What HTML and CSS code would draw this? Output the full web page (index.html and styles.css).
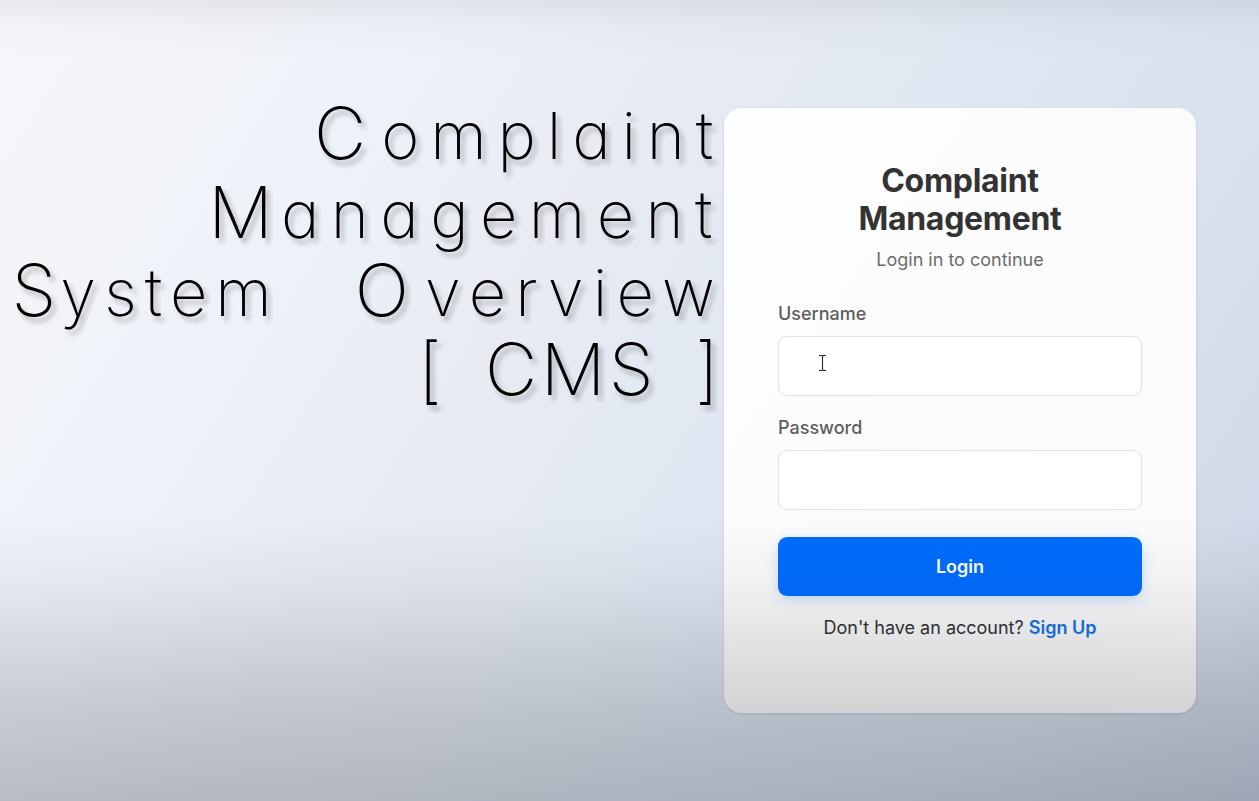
FILE: index.html
```html
<!DOCTYPE html>
<html lang="en">
<head>
<meta charset="utf-8">
<title>Complaint Management</title>
<link rel="stylesheet" href="styles.css">
</head>
<body>
<main class="page">
  <h1 class="hero">
    <span class="line l1">C<span class="low">omplaint</span></span>
    <span class="line l2">M<span class="low">anagement</span></span>
    <span class="line l3"><span class="w-system">S<span class="low">ystem</span></span> <span class="w-overview">O<span class="low">verview</span></span></span>
    <span class="line l4"><span>[</span><span class="w-cms">CMS</span><span>]</span></span>
  </h1>
  <form class="card">
    <h2 class="title">Complaint<br>Management</h2>
    <p class="subtitle">Login in to continue</p>
    <label class="label" for="user">Username</label>
    <div class="field">
      <input class="input" id="user" type="text">
      <svg class="cursor" viewBox="0 0 9 18" width="9" height="18"><path d="M1 1.5H3.5L4.5 2.3L5.5 1.5H8M4.5 2V16M1 16.5H3.5L4.5 15.7L5.5 16.5H8" fill="none" stroke="#222" stroke-width="1.1"/></svg>
    </div>
    <label class="label" for="pass">Password</label>
    <div class="field"><input class="input" id="pass" type="password"></div>
    <button class="button" type="button">Login</button>
    <p class="signup">Don't have an account? <a class="link" href="#">Sign Up</a></p>
  </form>
</main>
</body>
</html>
```
FILE: styles.css
```css
* { box-sizing: border-box; }
body { margin: 0; font-family: Inter, "Liberation Sans", sans-serif; }
.page {
  position: relative;
  display: flex;
  align-items: flex-start;
  width: 100%;
  height: 801px;
  overflow: hidden;
  background: linear-gradient(122deg, #f6f7fa 0%, #f2f4f8 12%, #edf1fa 26%, #e8ebf3 40%, #e2e9f3 53%, #dde4f0 66%, #d4deea 84%, #ccd3e4 100%);
}
.page::after {
  content: "";
  position: absolute;
  inset: 0;
  pointer-events: none;
  background:
    linear-gradient(rgba(0,0,0,.06) 0, rgba(0,0,0,.015) 25px, transparent 60px),
    linear-gradient(transparent 515px, rgba(0,0,0,.04) 580px, rgba(0,2,6,.1) 645px, rgba(0,2,6,.16) 712px, rgba(0,4,12,.22) 801px);
}
.hero {
  flex: none;
  width: 724px;
  margin: 0;
  padding-top: 94px;
  font: 150 72px/78.5px Inter, sans-serif;
  font-feature-settings: "cv11" 1;
  color: #000;
  text-shadow: 4px 5px 5px rgba(0,0,0,.26);
}
.line { display: flex; justify-content: flex-end; align-items: baseline; height: 78.5px; white-space: nowrap; }
.low { font-size: 65px; line-height: 1; }
.l1 { letter-spacing: 15px; }
.l1 .low { letter-spacing: 10.8px; }
.l2 { letter-spacing: 8px; }
.l2 .low { letter-spacing: 11.4px; }
.l3 { gap: 75px; }
.w-system { letter-spacing: 4px; }
.w-system .low { letter-spacing: 8px; }
.w-overview { letter-spacing: 16px; }
.w-overview .low { letter-spacing: 9.2px; }
.l4 { letter-spacing: 5px; gap: 38px; }
.w-cms { letter-spacing: 3.5px; }
.card {
  flex: none;
  width: 472px;
  height: 605px;
  margin-top: 108px;
  padding: 54px;
  border-radius: 18px;
  background: linear-gradient(125deg, #fdfeff, #fbfbfc 55%, #fcfcff);
  box-shadow: 0 1px 3px rgba(60,80,120,.18);
}
.title { margin: 0; text-align: center; font-size: 32px; line-height: 38px; font-weight: 700; letter-spacing: -.3px; color: #333; }
.subtitle { margin: 11px 0 0; text-align: center; font-size: 18px; line-height: 22px; color: #6c6c6c; }
.label { display: block; margin-top: 31px; font-size: 18px; line-height: 24px; font-weight: 500; color: #5e5e5e; }
.field { position: relative; height: 60px; margin-top: 10px; }
.field + .label { margin-top: 20px; }
.input { display: block; width: 100%; height: 60px; border: 1px solid #e0e1e3; border-radius: 9px; background: #fff; outline: none; }
.cursor { position: absolute; left: 40px; top: 18px; }
.button { display: block; width: 100%; height: 59px; margin-top: 27px; border: 0; border-radius: 9px; background: #006dff; color: #fff; font: 600 18px/22px Inter, sans-serif; box-shadow: 0 4px 14px rgba(0,109,255,.2); }
.signup { margin: 20px 0 0; text-align: center; font-size: 18px; line-height: 24px; color: #333; }
.link { color: #1475e6; font-weight: 600; text-decoration: none; }
```
